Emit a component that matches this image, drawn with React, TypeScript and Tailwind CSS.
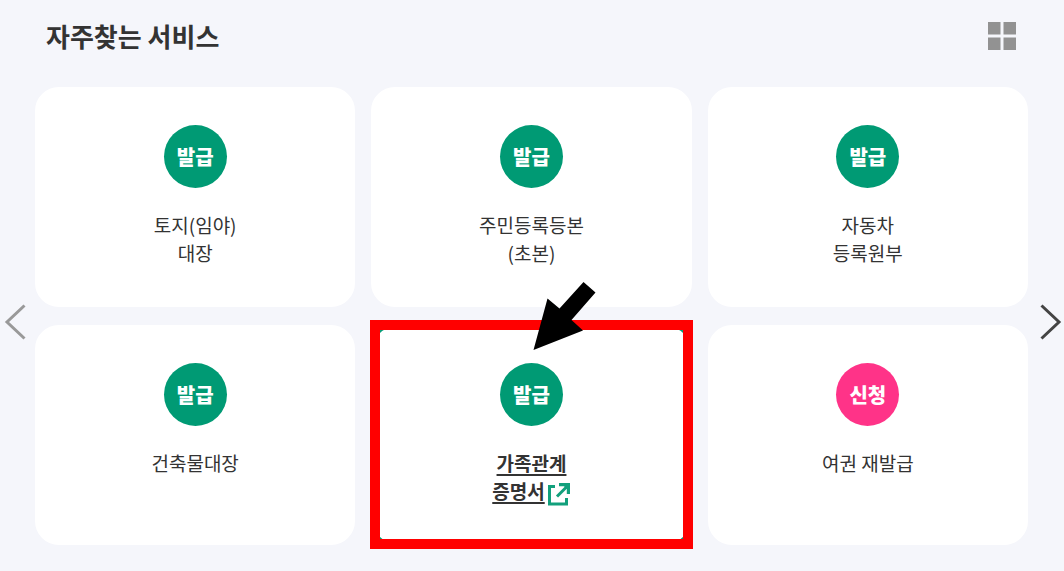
type Service = {
  badge: string;
  lines: string[];
  tone?: 'green' | 'pink';
  active?: boolean;
};

const services: Service[] = [
  { badge: '발급', lines: ['토지(임야)', '대장'] },
  { badge: '발급', lines: ['주민등록등본', '(초본)'] },
  { badge: '발급', lines: ['자동차', '등록원부'] },
  { badge: '발급', lines: ['건축물대장'] },
  { badge: '발급', lines: ['가족관계', '증명서'], active: true },
  { badge: '신청', lines: ['여권 재발급'], tone: 'pink' },
];

function ExternalIcon() {
  return (
    <svg className="ml-0.5 inline-block h-6 w-6 align-middle" viewBox="0 0 24 24" fill="none" stroke="#12a07c" strokeWidth="3" aria-hidden="true">
      <path d="M8 4.500H2.500V22H19.500V16" />
      <path d="M10 14.500L19.500 5" />
      <path d="M12 1H23V12H19.800V7L17 4.200H12z" fill="#12a07c" stroke="none" />
    </svg>
  );
}

/* Red frame and pointer laid over the card being pointed out */
function Callout() {
  return (
    <span className="pointer-events-none" aria-hidden="true">
      <span className="absolute -inset-x-px -top-[5px] -bottom-1 border-[10px] border-[#ff0000]" />
      <svg className="absolute -top-11 left-1/2 ml-0.5 h-[70px] w-[64px]" viewBox="0 0 64 70">
        <polygon points="0.500,69 14.500,17.500 26.500,27.500 50.500,1 62.500,11.500 38.500,39 50,49.500" fill="#000" />
      </svg>
    </span>
  );
}

function ServiceCard({ badge, lines, tone = 'green', active }: Service) {
  return (
    <li className="relative">
      <a
        href="#"
        className={`flex h-[220px] flex-col items-center rounded-3xl border-2 bg-white pt-9 text-center text-[#333] ${
          active ? 'border-[#009a74]' : 'border-white'
        }`}
      >
        <span
          className={`flex h-[63px] w-[63px] shrink-0 items-center justify-center rounded-full text-[20px] leading-7 font-black text-white ${
            tone === 'pink' ? 'bg-[#ff3388]' : 'bg-[#009a74]'
          }`}
        >
          {badge}
        </span>
        <span
          className={`mt-[23px] text-[19px] leading-7 ${
            active ? 'font-bold underline decoration-2 underline-offset-3' : ''
          }`}
        >
          {lines.map((line, i) => (
            <span key={line} className="block whitespace-nowrap">
              {line}
              {active && i === lines.length - 1 && <ExternalIcon />}
            </span>
          ))}
        </span>
      </a>
      {active && <Callout />}
    </li>
  );
}

export default function App() {
  return (
    <main className="min-h-screen bg-[#f5f6fb] pb-6 font-['Noto_Sans_CJK_KR','Noto_Sans',sans-serif] text-[#333]">
      <header className="flex h-[87px] items-start justify-between pt-4 pr-12 pl-[46px]">
        <h2 className="text-[26px] leading-10 font-bold">자주찾는 서비스</h2>
        <button type="button" aria-label="전체 보기" className="mt-1.5">
          <svg className="h-7 w-7" viewBox="0 0 28 28" fill="#929292" aria-hidden="true">
            <path d="M0 0h12.500v12.500H0zM15.500 0H28v12.500H15.500zM0 15.500h12.500V28H0zM15.500 15.500H28V28H15.500z" />
          </svg>
        </button>
      </header>
      <div className="flex items-center">
        <button type="button" aria-label="이전" className="flex w-[35px] shrink-0 pt-3 pl-1">
          <svg className="h-9 w-6" viewBox="0 0 24 36" fill="none" stroke="#999" strokeWidth="3" aria-hidden="true">
            <path d="M20.500 1.500L3 18L20.500 34.500" />
          </svg>
        </button>
        <ul className="grid flex-1 grid-cols-3 gap-x-4 gap-y-[18px]">
          {services.map((s) => (
            <ServiceCard key={s.lines.join('')} {...s} />
          ))}
        </ul>
        <button type="button" aria-label="다음" className="flex w-9 shrink-0 justify-end pt-3 pr-0.5">
          <svg className="h-9 w-6" viewBox="0 0 24 36" fill="none" stroke="#444" strokeWidth="3" aria-hidden="true">
            <path d="M3.500 1.500L21 18L3.500 34.500" />
          </svg>
        </button>
      </div>
    </main>
  );
}
